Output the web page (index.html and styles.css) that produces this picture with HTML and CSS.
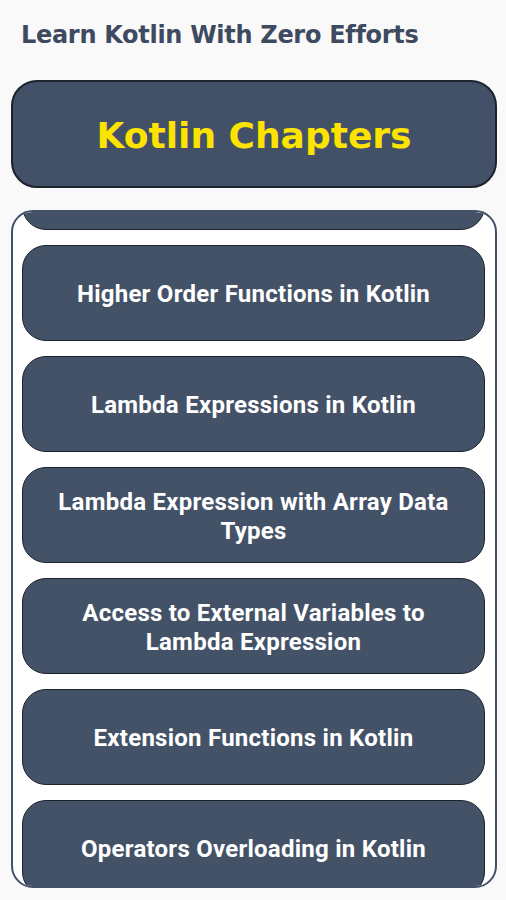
FILE: index.html
```html
<!DOCTYPE html>
<html>
<head>
<meta charset="utf-8">
<link rel="stylesheet" href="styles.css">
</head>
<body>
<div class="app">
  <h1 class="app-title">Learn Kotlin With Zero Efforts</h1>
  <div class="banner">Kotlin Chapters</div>
  <div class="chapters">
    <ul class="chapter-list">
      <li class="chapter">Functions in Kotlin</li>
      <li class="chapter">Higher Order Functions in Kotlin</li>
      <li class="chapter">Lambda Expressions in Kotlin</li>
      <li class="chapter">Lambda Expression with Array Data Types</li>
      <li class="chapter">Access to External Variables to Lambda Expression</li>
      <li class="chapter">Extension Functions in Kotlin</li>
      <li class="chapter">Operators Overloading in Kotlin</li>
    </ul>
  </div>
</div>
</body>
</html>
```

FILE: styles.css
```css
html, body {
  margin: 0;
  padding: 0;
  background: #f9f9f9;
}
.app {
  width: 506px;
  height: 900px;
  box-sizing: border-box;
  padding: 0 9px 0 11px;
  display: flex;
  flex-direction: column;
  overflow: hidden;
}
.app-title {
  margin: 20px 0 0 10px;
  height: 30px;
  line-height: 30px;
  font-family: "DejaVu Sans", sans-serif;
  font-weight: bold;
  font-size: 24px;
  color: #3d4a5f;
  letter-spacing: -0.3px;
  white-space: nowrap;
}
.banner {
  margin-top: 30px;
  height: 108px;
  box-sizing: border-box;
  border: 2px solid #1c232d;
  border-radius: 26px;
  background: #435168;
  display: flex;
  align-items: center;
  justify-content: center;
  font-family: "DejaVu Sans", sans-serif;
  font-weight: bold;
  font-size: 36px;
  color: #fde300;
  padding-top: 2px;
}
.chapters {
  margin-top: 22px;
  height: 678px;
  box-sizing: border-box;
  border: 2px solid #435168;
  border-radius: 22px;
  background: #ffffff;
  overflow: hidden;
}
.chapter-list {
  list-style: none;
  margin: -78px 0 0 0;
  padding: 0 10px 0 9px;
  display: flex;
  flex-direction: column;
  gap: 15px;
}
.chapter {
  height: 96px;
  flex: none;
  box-sizing: border-box;
  border: 1.5px solid #1c232d;
  border-radius: 24px;
  background: #445268;
  display: flex;
  align-items: center;
  justify-content: center;
  text-align: center;
  padding: 3px 18px 0;
  font-family: Roboto, "Noto Sans", sans-serif;
  font-weight: bold;
  font-size: 24px;
  line-height: 29px;
  letter-spacing: 0.25px;
  color: #ffffff;
}
```
